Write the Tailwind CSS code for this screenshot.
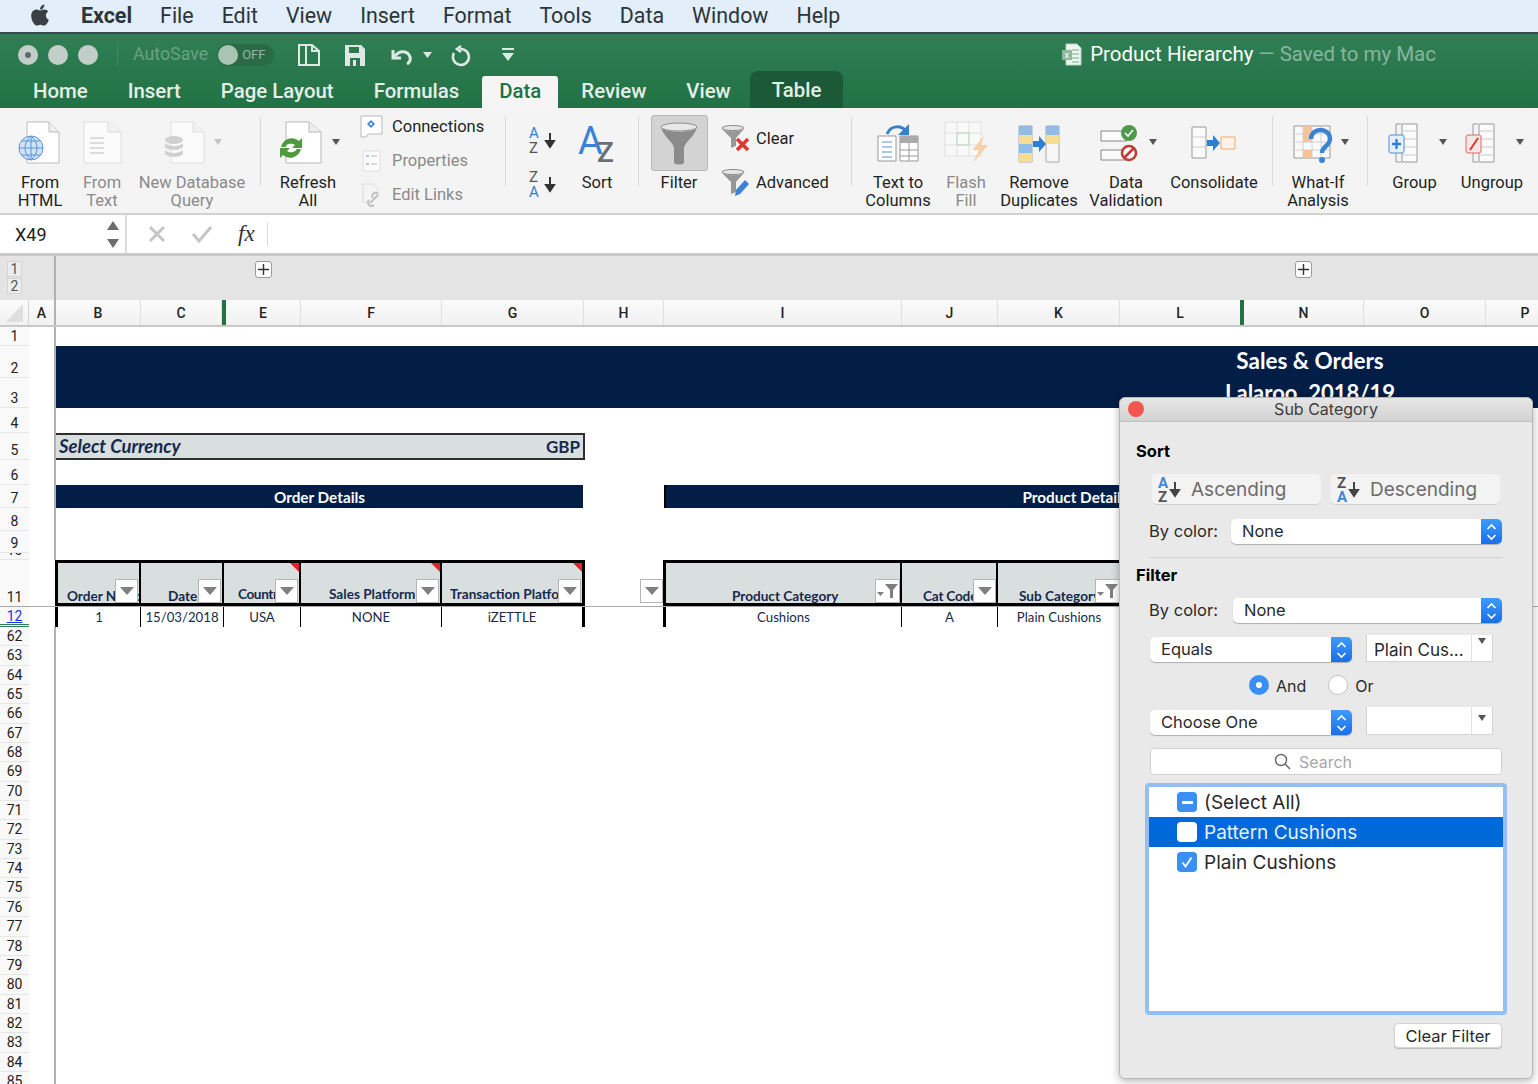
<!DOCTYPE html>
<html lang="en">
<head>
<meta charset="UTF-8">
<title>Product Hierarchy</title>
<script src="https://cdn.jsdelivr.net/npm/@tailwindcss/browser@4"></script>
</head>
<body class="w-[1538px] h-[1084px] overflow-hidden relative bg-white [font-family:Roboto,sans-serif] text-[#1c1c1c]">

<!-- mac menu bar -->
<div class="h-[34px] bg-[#e2eefa] border-b-2 border-[#3c4a4f] flex items-center pl-[30px] pt-px text-[21.4px] text-[#2b3438]">
  <svg class="w-[20px] h-[24px] mb-[3px]" viewBox="0 0 384 512" fill="#3a3f44"><path d="M318.7 268.7c-.2-36.7 16.4-64.4 50-84.8-18.8-26.9-47.2-41.7-84.7-44.6-35.5-2.8-74.3 20.7-88.5 20.7-15 0-49.4-19.7-76.4-19.7C63.3 141.2 4 184.8 4 273.5q0 39.3 14.4 81.2c12.8 36.7 59 126.7 107.2 125.2 25.2-.6 43-17.9 75.8-17.9 31.8 0 48.3 17.9 76.4 17.9 48.6-.7 90.4-82.5 102.6-119.3-65.2-30.7-61.7-90-61.7-91.9zm-56.6-164.2c27.3-32.4 24.8-61.9 24-72.5-24.1 1.4-52 16.4-67.9 34.9-17.5 19.8-27.8 44.3-25.6 71.9 26.1 2 49.9-11.4 69.5-34.3z"/></svg>
  <div class="flex gap-[28px] ml-[31px]">
    <span class="font-bold">Excel</span><span>File</span><span>Edit</span><span>View</span><span>Insert</span><span>Format</span><span>Tools</span><span>Data</span><span>Window</span><span>Help</span>
  </div>
</div>

<!-- title bar + tabs -->
<div class="h-[74px] bg-gradient-to-b from-[#317e55] to-[#207245] flex flex-col">
  <div class="h-[39px] flex items-center pl-[18px] pt-[2px] relative">
    <div class="w-[20px] h-[20px] rounded-full bg-[#c3cec8] flex items-center justify-center"><div class="w-[6px] h-[6px] rounded-full bg-[#5f6b64]"></div></div>
    <div class="w-[20px] h-[20px] rounded-full bg-[#c3cec8] ml-[10px]"></div>
    <div class="w-[20px] h-[20px] rounded-full bg-[#c3cec8] ml-[10px]"></div>
    <div class="w-px h-[24px] bg-[#3f8a60] ml-[19px]"></div>
    <span class="ml-[15px] text-[17.8px] text-white/30">AutoSave</span>
    <div class="ml-[9px] w-[57px] h-[22px] rounded-full bg-[#2a6b46] flex items-center">
      <div class="w-[20px] h-[20px] rounded-full bg-[#a9c4b3] ml-px"></div>
      <span class="ml-[4px] text-[13px] text-white/50">OFF</span>
    </div>
    <svg class="ml-[23px]" width="24" height="24" viewBox="0 0 24 24" fill="none" stroke="#dfe9e3" stroke-width="2"><path d="M2 2h13l7 6v14H2z"/><path d="M9 2v20M15 2v6h7"/></svg>
    <svg class="ml-[23px]" width="22" height="24" viewBox="0 0 22 24" fill="#dfe9e3"><path d="M1 2h16l4 4v17H1z"/><path d="M5 4h10v6H5z" fill="#2a7a4e"/><path d="M6 15h10v8H6z" fill="#2a7a4e"/><path d="M9 17h3v6H9z"/></svg>
    <svg class="ml-[23px]" width="26" height="20" viewBox="0 0 26 20" fill="none" stroke="#dfe9e3" stroke-width="3"><path d="M4 5v8h8"/><path d="M5 12c6-8 14-6 16 0 1 3-1 6-3 7"/></svg>
    <svg class="ml-[8px]" width="9" height="6" viewBox="0 0 9 6" fill="#dfe9e3"><path d="M0 0h9L4.5 6z"/></svg>
    <svg class="ml-[17px]" width="22" height="24" viewBox="0 0 22 24" fill="none" stroke="#dfe9e3" stroke-width="2.6"><path d="M12 3L8 6l4 3"/><path d="M11 6a8 8 0 1 1-6 4"/></svg>
    <svg class="ml-[31px]" width="12" height="13" viewBox="0 0 12 13" fill="#dfe9e3"><path d="M0 0h12v2H0zM0 5h12L6 13z"/></svg>
    <svg class="ml-[548px]" width="20" height="23" viewBox="0 0 20 23"><path d="M4 1h11l4 4v17H4z" fill="#eef5f0" stroke="#b9d4c3"/><path d="M10 7h7M10 11h7M10 15h7M10 19h7" stroke="#6fae87"/><path d="M0 7h10v10H0z" fill="#8fb8a0"/><text x="2.5" y="15" font-size="9" fill="#fff">x</text></svg>
    <span class="ml-[8px] text-[20.5px] text-white">Product Hierarchy</span>
    <span class="ml-[5px] text-[20.5px] text-white/45">— Saved to my Mac</span>
  </div>
  <div class="h-[35px] flex items-end pl-[33px] gap-[40px] text-[20.4px] font-medium text-[#e4efe8] leading-[30px]">
    <span class="h-[32px]">Home</span><span class="h-[32px]">Insert</span><span class="h-[32px]">Page Layout</span><span class="h-[32px]">Formulas</span>
    <span class="h-[32px] px-[17px] -mx-[17px] bg-[#f5f5f5] text-[#1f7244] rounded-t-[3px]">Data</span>
    <span class="h-[32px]">Review</span><span class="h-[32px]">View</span>
    <span class="h-[37px] leading-[39px] px-[22px] -mx-[21px] bg-[#1c5a37] text-[#e4efe8] rounded-t-[8px]">Table</span>
  </div>
</div>

<!-- ribbon -->
<div class="h-[107px] bg-[#f4f4f4] flex text-[16.5px] leading-[18px] text-center text-[#1f1f1f] border-b-2 border-[#d2d2d2] [&>div]:shrink-0 [&>div>svg]:mb-[2px]">
  <!-- get data -->
  <div class="w-[80px] flex flex-col items-center">
    <svg width="80" height="64" viewBox="0 108 80 64"><path d="M27 122h22l10 10v31H27z" fill="#fff" stroke="#bcbcbc"/><path d="M49 122v10h10" fill="#eee" stroke="#bcbcbc"/><circle cx="31" cy="148" r="12" fill="#cfe2f7" stroke="#5b93d6"/><path d="M19 148h24M31 136v24M22 141h18M22 155h18M31 136c-8 7-8 17 0 24M31 136c8 7 8 17 0 24" fill="none" stroke="#5b93d6"/></svg>
    <span>From<br>HTML</span>
  </div>
  <div class="w-[44px] flex flex-col items-center text-[#8a8a8a]">
    <svg width="44" height="64" viewBox="80 108 44 64"><path d="M84 122h24l13 10v31H84z" fill="#fbfbfb" stroke="#dcdcdc"/><path d="M108 122v10h13" fill="#f2f2f2" stroke="#dcdcdc"/><path d="M90 138h14M90 143h14M90 148h14M90 153h14" stroke="#d2d2d2" stroke-width="1.5"/></svg>
    <span>From<br>Text</span>
  </div>
  <div class="w-[136px] flex flex-col items-center text-[#8a8a8a]">
    <svg width="136" height="64" viewBox="124 108 136 64"><path d="M171 122h22l11 10v31h-33z" fill="#fbfbfb" stroke="#dfdfdf"/><path d="M193 122v10h11" fill="#f2f2f2" stroke="#dfdfdf"/><ellipse cx="174" cy="140" rx="9" ry="4" fill="#d0d0d0"/><path d="M165 143c3 4 15 4 18 0v4c-3 4-15 4-18 0zM165 150c3 4 15 4 18 0v4c-3 4-15 4-18 0z" fill="#d0d0d0"/><path d="M214 139h8l-4 6z" fill="#c4c4c4"/></svg>
    <span>New Database<br>Query</span>
  </div>
  <div class="w-px h-[70px] mt-[8px] bg-[#dadada]"></div>
  <!-- connections -->
  <div class="w-[94px] flex flex-col items-center">
    <svg width="94" height="64" viewBox="262 108 94 64"><path d="M287 122h23l12 10v31h-35z" fill="#fff" stroke="#b8b8b8"/><path d="M310 122v10h12" fill="#eee" stroke="#b8b8b8"/><path d="M282 147a11 11 0 0 1 18-6l3-3v10h-10l3-3a7 7 0 0 0-10 2z" fill="#4f9a3f"/><path d="M302 149a11 11 0 0 1-18 6l-3 3v-10h10l-3 3a7 7 0 0 0 10-2z" fill="#4f9a3f"/><path d="M333 139h8l-4 6z" fill="#555"/></svg>
    <span>Refresh<br>All</span>
  </div>
  <div class="flex flex-col pt-[2px] pl-[5px] w-[150px] text-left">
    <div class="h-[34px] flex items-center"><svg class="w-[24px] h-[24px] shrink-0" viewBox="0 0 24 24"><path d="M1 1h21v18H8l-2 3H1z" fill="#fff" stroke="#b8b8b8"/><path d="M11 5l4 4-4 4-4-4z" fill="#3d85d6"/><circle cx="11" cy="9" r="1.3" fill="#fff"/></svg><span class="ml-[8px]">Connections</span></div>
    <div class="h-[34px] flex items-center text-[#8a8a8a]"><svg class="w-[24px] h-[24px] shrink-0" viewBox="0 0 24 24"><path d="M3 2h17v20H3z" fill="#fbfbfb" stroke="#dedede"/><path d="M6 7h3M6 15h3" stroke="#a9c9ee" stroke-width="2"/><path d="M11 7h6M11 15h6" stroke="#cfcfcf" stroke-width="1.5"/></svg><span class="ml-[8px]">Properties</span></div>
    <div class="h-[34px] flex items-center text-[#8a8a8a]"><svg class="w-[24px] h-[24px] shrink-0" viewBox="0 0 24 24"><path d="M3 1h10l5 5v8M3 1v18h5" fill="none" stroke="#dcdcdc"/><path d="M10 20l8-8M13 15a3 3 0 0 1 5-4M9 17a3 3 0 0 0 5 5" fill="none" stroke="#c0c0c0" stroke-width="2"/></svg><span class="ml-[8px]">Edit Links</span></div>
  </div>
  <div class="w-px h-[70px] mt-[8px] bg-[#dadada]"></div>
  <!-- sort -->
  <div class="w-[132px] flex">
    <div class="w-[66px] flex flex-col pl-[22px] pt-[17px] gap-[14px]">
      <svg class="overflow-visible" width="30" height="30" viewBox="0 0 30 30"><text x="1" y="13" font-size="15" fill="#2f7fd8" font-family="Roboto">A</text><text x="1" y="28" font-size="15" fill="#555" font-family="Roboto">Z</text><path d="M22 8v11M18 16l4 6 4-6z" stroke="#333" stroke-width="2" fill="#333"/></svg>
      <svg class="overflow-visible" width="30" height="30" viewBox="0 0 30 30"><text x="1" y="13" font-size="15" fill="#555" font-family="Roboto">Z</text><text x="1" y="28" font-size="15" fill="#2f7fd8" font-family="Roboto">A</text><path d="M22 8v11M18 16l4 6 4-6z" stroke="#333" stroke-width="2" fill="#333"/></svg>
    </div>
    <div class="w-[50px] flex flex-col items-center">
      <svg class="mb-[2px]" width="50" height="64" viewBox="0 0 50 64"><text x="6" y="46" font-size="38" fill="#3b82d6" font-family="Roboto">A</text><text x="25" y="54" font-size="28" fill="#6b6f74" font-family="Roboto" font-weight="500">Z</text></svg>
      <span>Sort</span>
    </div>
  </div>
  <div class="w-px h-[70px] mt-[8px] bg-[#dadada]"></div>
  <!-- filter -->
  <div class="w-[82px] flex flex-col items-center pr-[2px]">
    <div class="mt-[7px] w-[57px] h-[56px] rounded-[3px] bg-[#d3d3d3] border border-[#b8b8b8] flex items-center justify-center">
      <svg width="40" height="44" viewBox="0 0 40 44"><ellipse cx="20" cy="6" rx="18" ry="4" fill="#e8e8e8" stroke="#8f8f8f"/><path d="M2 7c4 10 12 14 13 20v15c3 2 7 2 10 0V27c1-6 9-10 13-20-6 5-30 5-36 0z" fill="#8b8b8b"/></svg>
    </div>
    <span class="mt-[3px]">Filter</span>
  </div>
  <div class="flex flex-col pt-[9px] w-[130px] text-left">
    <div class="h-[44px] flex items-center"><svg class="w-[30px] h-[30px] shrink-0" viewBox="0 0 30 30"><ellipse cx="12" cy="4" rx="11" ry="2.500" fill="#e6e6e6" stroke="#8a8a8a"/><path d="M1 5l9 9v10l5-2v-8l8-9c-6 3-16 3-22 0z" fill="#979797"/><path d="M16 15l11 11M27 15L16 26" stroke="#d83a2e" stroke-width="3.4"/></svg><span class="ml-[5px]">Clear</span></div>
    <div class="h-[44px] flex items-center"><svg class="w-[30px] h-[30px] shrink-0" viewBox="0 0 30 30"><ellipse cx="12" cy="4" rx="11" ry="2.500" fill="#e6e6e6" stroke="#8a8a8a"/><path d="M1 5l9 9v12l5-2V14l8-9c-6 3-16 3-22 0z" fill="#979797"/><path d="M15 22l9-10 4 4-9 10-5 2z" fill="#3b82d6"/></svg><span class="ml-[5px]">Advanced</span></div>
  </div>
  <div class="w-px h-[70px] mt-[8px] bg-[#dadada]"></div>
  <!-- data tools -->
  <div class="w-[92px] flex flex-col items-center">
    <svg width="92" height="64" viewBox="853 108 92 64"><path d="M888 134c4-9 14-9 19-3" fill="none" stroke="#3b7fc9" stroke-width="3"/><path d="M910 124v11h-11z" fill="#3b7fc9"/><path d="M879 136h18v25h-18z" fill="#fff" stroke="#999"/><path d="M883 142h10M883 147h10M883 152h10M883 157h10" stroke="#8fb8e8" stroke-width="1.5"/><path d="M901 136h18v25h-18z" fill="#fff" stroke="#999"/><path d="M901 136h18v7h-18z" fill="#aaa"/><path d="M910 143v18M901 150h18M901 156h18" stroke="#999"/></svg>
    <span>Text to<br>Columns</span>
  </div>
  <div class="w-[44px] flex flex-col items-center text-[#8a8a8a]">
    <svg width="44" height="64" viewBox="945 108 44 64"><path d="M946 122h36v34h-36z" fill="#f9f9f9" stroke="#e0e0e0"/><path d="M958 122v34M970 122v34M946 133h36M946 145h36" stroke="#e0e0e0"/><path d="M958 133h12v12h-12z" fill="none" stroke="#b8d6bf"/><path d="M985 136l-12 14h7l-6 13 15-18h-7z" fill="#f7cfa8"/></svg>
    <span>Flash<br>Fill</span>
  </div>
  <div class="w-[102px] flex flex-col items-center">
    <svg width="102" height="64" viewBox="989 108 102 64"><path d="M1020 126h13v36h-13z" fill="#fff" stroke="#aaa"/><path d="M1020 126h13v9h-13zM1020 144h13v9h-13z" fill="#8fbdea"/><path d="M1020 135h13v9h-13zM1020 153h13v9h-13z" fill="#f6dd93"/><path d="M1047 126h13v36h-13z" fill="#f6f6f6" stroke="#aaa"/><path d="M1047 126h13v9h-13z" fill="#8fbdea"/><path d="M1047 135h13v9h-13z" fill="#f6dd93"/><path d="M1034 141h6v-5l7 8-7 8v-5h-6z" fill="#2f7fd0"/></svg>
    <span>Remove<br>Duplicates</span>
  </div>
  <div class="w-[72px] flex flex-col items-center">
    <svg width="72" height="64" viewBox="1091 108 72 64"><path d="M1102 131h26v10h-26zM1102 150h26v10h-26z" fill="#fbfbfb" stroke="#888"/><circle cx="1130" cy="133" r="8" fill="#4f9a4a"/><path d="M1126 133l3 3 5-6" fill="none" stroke="#fff" stroke-width="1.6"/><circle cx="1130" cy="153" r="7" fill="#fff" stroke="#c23b34" stroke-width="2.6"/><path d="M1125 158l10-10" stroke="#c23b34" stroke-width="2.6"/><path d="M1150 139h8l-4 6z" fill="#555"/></svg>
    <span>Data<br>Validation</span>
  </div>
  <div class="w-[104px] mr-[6px] flex flex-col items-center">
    <svg width="104" height="64" viewBox="1163 108 104 64"><path d="M1193 127h14v31h-14z" fill="#fbfbfb" stroke="#999"/><path d="M1193 137h14M1193 147h14" stroke="#ccc"/><path d="M1208 140h6v-5l7 8-7 8v-5h-6z" fill="#2f7fd0"/><path d="M1222 137h14v12h-14z" fill="#fdf3e8" stroke="#f0a868"/></svg>
    <span>Consolidate</span>
  </div>
  <div class="w-px h-[70px] mt-[8px] bg-[#dadada]"></div>
  <div class="w-[90px] mr-[4px] flex flex-col items-center">
    <svg class="overflow-visible" width="90" height="64" viewBox="1274 108 90 64"><path d="M1295 126h36v32h-36z" fill="#fafafa" stroke="#999"/><path d="M1304 126v32M1313 126v32M1322 126v32M1295 134h36M1295 142h36M1295 150h36" stroke="#d0d0d0"/><path d="M1304 126h9v8h-9zM1304 134h9v8h-9zM1304 150h9v8h-9z" fill="#f5c299"/><path d="M1312 139c0-12 19-12 19 0 0 7-8 7-8 14" fill="none" stroke="#3c82cf" stroke-width="4.4"/><circle cx="1323" cy="160" r="3" fill="#3c82cf"/><path d="M1342 139h8l-4 6z" fill="#555"/></svg>
    <span>What-If<br>Analysis</span>
  </div>
  <div class="w-px h-[70px] mt-[8px] bg-[#dadada]"></div>
  <div class="w-[93px] flex flex-col items-center">
    <svg width="93" height="64" viewBox="1369 108 93 64"><path d="M1402 124h-5v38h5" fill="none" stroke="#999"/><path d="M1403 124h15v38h-15z" fill="#fbfbfb" stroke="#999"/><path d="M1403 131h15M1403 139h15M1403 147h15M1403 155h15" stroke="#ccc"/><rect x="1390" y="135" width="15" height="18" rx="2" fill="#e5f0fc" stroke="#4d8fd6"/><path d="M1397.500 139v10M1393 144h9" stroke="#2f7fd0" stroke-width="2.4"/><path d="M1440 139h8l-4 6z" fill="#555"/></svg>
    <span>Group</span>
  </div>
  <div class="w-[62px] flex flex-col items-center">
    <svg class="shrink-0 overflow-visible" width="62" height="64" viewBox="1462 108 62 64"><path d="M1479 124h-5v38h5" fill="none" stroke="#999"/><path d="M1480 124h15v38h-15z" fill="#fbfbfb" stroke="#999"/><path d="M1480 131h15M1480 139h15M1480 147h15M1480 155h15" stroke="#ccc"/><rect x="1467" y="135" width="15" height="18" rx="2" fill="#fbe5e5" stroke="#d96a66"/><path d="M1471 150l8-12" stroke="#d83a2e" stroke-width="2"/><path d="M1517 139h8l-4 6z" fill="#555"/></svg>
    <span>Ungroup</span>
  </div>
</div>

<!-- formula bar -->
<div class="h-[41px] bg-white border-b-[3px] border-[#c9c9c9] flex items-center text-[18px]">
  <div class="w-[127px] h-full border-r-2 border-[#dddddd] flex items-center pl-[15px] justify-between pr-[6px]">
    <span>X49</span>
    <svg width="12" height="27" viewBox="0 0 12 27" fill="#6d6d6d"><path d="M6 0l6 9H0zM6 27l6-9H0z"/></svg>
  </div>
  <svg class="ml-[21px]" width="18" height="18" viewBox="0 0 18 18" stroke="#c6c6c6" stroke-width="3"><path d="M2 2l14 14M16 2L2 16"/></svg>
  <svg class="ml-[25px]" width="22" height="18" viewBox="0 0 22 18" fill="none" stroke="#c6c6c6" stroke-width="3"><path d="M2 9l6 7L20 2"/></svg>
  <span class="ml-[25px] [font-family:'Liberation_Serif',serif] italic text-[23px] text-[#333]">fx</span>
  <div class="ml-[12px] w-px h-[24px] bg-[#dcdcdc]"></div>
</div>

<!-- outline levels -->
<div class="h-[44px] bg-[#e4e4e4] flex">
  <div class="w-[56px] shrink-0 border-r-2 border-[#b2b2b2] pl-[7px] pt-[5px] flex flex-col gap-px text-[14px] leading-[16px] text-[#555] text-center">
    <span class="w-[15px] h-[16px] bg-[#ececec] border border-[#d4d4d4] leading-[14px]">1</span>
    <span class="w-[15px] h-[16px] bg-[#ececec] border border-[#d4d4d4] leading-[14px]">2</span>
  </div>
  <div class="ml-[199px] mt-[5px] w-[17px] h-[17px] bg-white border border-[#9a9a9a] rounded-[3px] flex items-center justify-center"><svg width="11" height="11" viewBox="0 0 11 11" stroke="#333" stroke-width="1.4"><path d="M5.500 0v11M0 5.500h11"/></svg></div>
  <div class="ml-[1023px] mt-[5px] w-[17px] h-[17px] bg-white border border-[#9a9a9a] rounded-[3px] flex items-center justify-center"><svg width="11" height="11" viewBox="0 0 11 11" stroke="#333" stroke-width="1.4"><path d="M5.500 0v11M0 5.500h11"/></svg></div>
</div>

<!-- column letters -->
<div class="h-[27px] flex bg-gradient-to-b from-[#fbfbfb] to-[#f1f1f1] border-b-2 border-[#c8c8c8] text-[14px] leading-[26px] text-[#222] text-center font-medium [&>div]:shrink-0">
  <div class="w-[29px] border-r border-[#d4d4d4] flex items-end justify-center pb-[3px]"><svg width="17" height="18" viewBox="0 0 17 18"><path d="M17 0v18H0z" fill="#dedede"/></svg></div>
  <div class="w-[27px] border-r-2 border-[#b2b2b2]">A</div>
  <div class="w-[85px] border-r border-[#e0e0e0]">B</div>
  <div class="w-[81px] border-r border-[#e0e0e0]">C</div>
  <div class="w-[4px] bg-[#217346]"></div>
  <div class="w-[75px] border-r border-[#e0e0e0]">E</div>
  <div class="w-[141px] border-r border-[#e0e0e0]">F</div>
  <div class="w-[142px] border-r border-[#e0e0e0]">G</div>
  <div class="w-[80px] border-r border-[#e0e0e0]">H</div>
  <div class="w-[238px] border-r border-[#e0e0e0]">I</div>
  <div class="w-[96px] border-r border-[#e0e0e0]">J</div>
  <div class="w-[122px] border-r border-[#e0e0e0]">K</div>
  <div class="w-[120px]">L</div>
  <div class="w-[4px] bg-[#217346]"></div>
  <div class="w-[120px] border-r border-[#e0e0e0]">N</div>
  <div class="w-[122px] border-r border-[#e0e0e0]">O</div>
  <div class="w-[78px]">P</div>
</div>

<!-- sheet rows -->
<div class="text-[#1a2a4a] [font-family:Lato,sans-serif]">
  <div class="h-[19px] flex">
    <div class="w-[29px] shrink-0 flex items-end justify-center overflow-hidden bg-[#f9f9f9] border-b border-[#e6e6e6] text-[14px] leading-[18px] text-[#222] [font-family:Roboto,sans-serif]">1</div>
    <div class="w-[27px] shrink-0 border-r-2 border-[#b2b2b2]"></div>
  </div>
  <div class="h-[32px] flex">
    <div class="w-[29px] shrink-0 flex items-end justify-center overflow-hidden bg-[#f9f9f9] border-b border-[#e6e6e6] text-[14px] leading-[18px] text-[#222] [font-family:Roboto,sans-serif]">2</div>
    <div class="w-[27px] shrink-0 border-r-2 border-[#b2b2b2]"></div>
    <div class="flex-1 bg-[#021e47] pl-[1154px] text-white font-bold text-[22.5px] leading-[30px]"><div class="w-[200px] text-center">Sales &amp; Orders</div></div>
  </div>
  <div class="h-[30px] flex">
    <div class="w-[29px] shrink-0 flex items-end justify-center overflow-hidden bg-[#f9f9f9] border-b border-[#e6e6e6] text-[14px] leading-[18px] text-[#222] [font-family:Roboto,sans-serif]">3</div>
    <div class="w-[27px] shrink-0 border-r-2 border-[#b2b2b2]"></div>
    <div class="flex-1 bg-[#021e47] pl-[1154px] text-white font-bold text-[22px] leading-[30px]"><div class="w-[200px] text-center">Lalaroo&nbsp; 2018/19</div></div>
  </div>
  <div class="h-[25px] flex">
    <div class="w-[29px] shrink-0 flex items-end justify-center overflow-hidden bg-[#f9f9f9] border-b border-[#e6e6e6] text-[14px] leading-[18px] text-[#222] [font-family:Roboto,sans-serif]">4</div>
    <div class="w-[27px] shrink-0 border-r-2 border-[#b2b2b2]"></div>
  </div>
  <div class="h-[27px] flex">
    <div class="w-[29px] shrink-0 flex items-end justify-center overflow-hidden bg-[#f9f9f9] border-b border-[#e6e6e6] text-[14px] leading-[18px] text-[#222] [font-family:Roboto,sans-serif]">5</div>
    <div class="w-[27px] shrink-0 border-r-2 border-[#b2b2b2]"></div>
    <div class="w-[529px] bg-[#d9dfdf] border-2 border-[#2e2e2e] border-l-0 flex items-center justify-between pl-[3px] pr-[3px] font-bold text-[#16294d]">
      <span class="italic text-[18.5px]">Select Currency</span><span class="text-[17px]">GBP</span>
    </div>
  </div>
  <div class="h-[25px] flex">
    <div class="w-[29px] shrink-0 flex items-end justify-center overflow-hidden bg-[#f9f9f9] border-b border-[#e6e6e6] text-[14px] leading-[18px] text-[#222] [font-family:Roboto,sans-serif]">6</div>
    <div class="w-[27px] shrink-0 border-r-2 border-[#b2b2b2]"></div>
  </div>
  <div class="h-[23px] flex">
    <div class="w-[29px] shrink-0 flex items-end justify-center overflow-hidden bg-[#f9f9f9] border-b border-[#e6e6e6] text-[14px] leading-[18px] text-[#222] [font-family:Roboto,sans-serif]">7</div>
    <div class="w-[27px] shrink-0 border-r-2 border-[#b2b2b2]"></div>
    <div class="w-[527px] bg-[#021e47] text-white font-bold text-[15.3px] text-center leading-[24px]">Order Details</div>
    <div class="ml-[81px] w-[820px] bg-[#021e47] border-l-2 border-black text-white font-bold text-[15.3px] text-center leading-[24px]">Product Details</div>
  </div>
  <div class="h-[23px] flex">
    <div class="w-[29px] shrink-0 flex items-end justify-center overflow-hidden bg-[#f9f9f9] border-b border-[#e6e6e6] text-[14px] leading-[18px] text-[#222] [font-family:Roboto,sans-serif]">8</div>
    <div class="w-[27px] shrink-0 border-r-2 border-[#b2b2b2]"></div>
  </div>
  <div class="h-[22px] flex">
    <div class="w-[29px] shrink-0 flex items-end justify-center overflow-hidden bg-[#f9f9f9] border-b border-[#e6e6e6] text-[14px] leading-[18px] text-[#222] [font-family:Roboto,sans-serif]">9</div>
    <div class="w-[27px] shrink-0 border-r-2 border-[#b2b2b2]"></div>
  </div>
  <div class="h-[7px] flex">
    <div class="w-[29px] shrink-0 flex items-end justify-center overflow-hidden bg-[#f9f9f9] border-b border-[#e6e6e6] text-[14px] leading-[18px] text-[#222] [font-family:Roboto,sans-serif]">10</div>
    <div class="w-[27px] shrink-0 border-r-2 border-[#b2b2b2]"></div>
  </div>

  <!-- row 11, table headers -->
  <div class="h-[46px] flex">
    <div class="w-[29px] shrink-0 flex items-end justify-center overflow-hidden bg-[#f9f9f9] text-[14px] leading-[18px] text-[#222] [font-family:Roboto,sans-serif]">11</div>
    <div class="w-[26px] shrink-0"></div>
    <div class="w-[530px] shrink-0 h-full border-[3px] border-black flex bg-[#d9dfdf] text-[13.6px] font-bold text-[#16294d] whitespace-nowrap text-center leading-[18px]">
      <div class="w-[83px] relative border-r-2 border-black overflow-hidden pl-[9px] pt-[24px] text-left">Order Number
        <div class="absolute right-[1px] bottom-0 w-[23px] h-[24px] bg-white border border-[#b5b5b5] flex items-center justify-center"><svg width="14" height="8" viewBox="0 0 14 8" fill="#7f7f7f"><path d="M0 0h14L7 8z"/></svg></div>
      </div>
      <div class="w-[83px] relative border-r-2 border-black overflow-hidden pl-[27px] pt-[24px] text-left">Date
        <div class="absolute right-[1px] bottom-0 w-[23px] h-[24px] bg-white border border-[#b5b5b5] flex items-center justify-center"><svg width="14" height="8" viewBox="0 0 14 8" fill="#7f7f7f"><path d="M0 0h14L7 8z"/></svg></div>
      </div>
      <div class="w-[77px] relative border-r-2 border-black overflow-hidden pl-[14px] pt-[22px] text-left tracking-[-0.4px]">Country
        <div class="absolute right-[1px] bottom-0 w-[23px] h-[24px] bg-white border border-[#b5b5b5] flex items-center justify-center"><svg width="14" height="8" viewBox="0 0 14 8" fill="#7f7f7f"><path d="M0 0h14L7 8z"/></svg></div>
        <svg class="absolute right-0 top-0" width="9" height="9" viewBox="0 0 9 9" fill="#e8202a"><path d="M0 0h9v9z"/></svg>
      </div>
      <div class="w-[141px] relative border-r-2 border-black overflow-hidden pl-[28px] pt-[22px] text-left">Sales Platform
        <div class="absolute right-[1px] bottom-0 w-[23px] h-[24px] bg-white border border-[#b5b5b5] flex items-center justify-center"><svg width="14" height="8" viewBox="0 0 14 8" fill="#7f7f7f"><path d="M0 0h14L7 8z"/></svg></div>
        <svg class="absolute right-0 top-0" width="9" height="9" viewBox="0 0 9 9" fill="#e8202a"><path d="M0 0h9v9z"/></svg>
      </div>
      <div class="w-[140px] relative overflow-hidden pl-[8px] pt-[22px] text-left">Transaction Platform
        <div class="absolute right-[1px] bottom-0 w-[23px] h-[24px] bg-white border border-[#b5b5b5] flex items-center justify-center"><svg width="14" height="8" viewBox="0 0 14 8" fill="#7f7f7f"><path d="M0 0h14L7 8z"/></svg></div>
        <svg class="absolute right-0 top-0" width="9" height="9" viewBox="0 0 9 9" fill="#e8202a"><path d="M0 0h9v9z"/></svg>
      </div>
    </div>
    <div class="ml-[55px] mt-[19px] w-[23px] h-[24px] shrink-0 bg-white border border-[#b5b5b5] flex items-center justify-center"><svg width="14" height="8" viewBox="0 0 14 8" fill="#7f7f7f"><path d="M0 0h14L7 8z"/></svg></div>
    <div class="w-[460px] shrink-0 h-full border-y-[3px] border-l-[3px] border-black flex bg-[#d9dfdf] text-[13.6px] font-bold text-[#16294d] whitespace-nowrap leading-[18px]">
      <div class="w-[236px] relative border-r-2 border-black overflow-hidden pl-[66px] pt-[24px]">Product Category
        <div class="absolute right-0 bottom-0 w-[25px] h-[24px] bg-white border border-[#b5b5b5] flex items-center justify-center"><svg width="22" height="16" viewBox="0 0 22 16" fill="#7f7f7f"><path d="M0 9h7L3.500 13zM8 1h13l-5 6v8h-3V7z"/></svg></div>
      </div>
      <div class="w-[96px] relative border-r-2 border-black overflow-hidden pl-[21px] pt-[24px] tracking-[-0.2px]">Cat Code
        <div class="absolute right-0 bottom-0 w-[23px] h-[24px] bg-white border border-[#b5b5b5] flex items-center justify-center"><svg width="14" height="8" viewBox="0 0 14 8" fill="#7f7f7f"><path d="M0 0h14L7 8z"/></svg></div>
      </div>
      <div class="w-[122px] relative overflow-hidden pl-[21px] pt-[24px]">Sub Category
        <div class="absolute right-0 bottom-0 w-[25px] h-[24px] bg-white border border-[#b5b5b5] flex items-center justify-center"><svg width="22" height="16" viewBox="0 0 22 16" fill="#7f7f7f"><path d="M0 9h7L3.500 13zM8 1h13l-5 6v8h-3V7z"/></svg></div>
      </div>
    </div>
  </div>

  <!-- row 12 -->
  <div class="h-[21px] flex border-t border-[#a8a8a8] text-[13.2px] leading-[20px] text-center whitespace-nowrap">
    <div class="w-[29px] shrink-0 border-b-[3px] border-double border-[#2f7d4f] bg-[#f9f9f9] text-[#1b35e8] underline text-[14px] leading-[18px] [font-family:Roboto,sans-serif]">12</div>
    <div class="w-[26px] shrink-0"></div>
    <div class="w-[530px] shrink-0 border-x-[3px] border-black flex">
      <div class="w-[83px] border-r border-black">1</div>
      <div class="w-[83px] border-r border-black">15/03/2018</div>
      <div class="w-[77px] border-r border-black">USA</div>
      <div class="w-[141px] border-r border-black">NONE</div>
      <div class="w-[140px]">iZETTLE</div>
    </div>
    <div class="ml-[78px] w-[460px] shrink-0 border-l-[3px] border-black flex">
      <div class="w-[236px] border-r border-black">Cushions</div>
      <div class="w-[96px] border-r border-black">A</div>
      <div class="w-[122px]">Plain Cushions</div>
    </div>
  </div>

  <!-- hidden rows collapse, rows 62+ -->
  <div class="flex">
    <div class="w-[29px] shrink-0 bg-[#f9f9f9] text-[14px] text-[#222] text-center [font-family:Roboto,sans-serif] [&>div]:h-[19.35px] [&>div]:leading-[19px] [&>div]:border-b [&>div]:border-[#e6e6e6]">
      <div>62</div><div>63</div><div>64</div><div>65</div><div>66</div><div>67</div><div>68</div><div>69</div><div>70</div><div>71</div><div>72</div><div>73</div><div>74</div><div>75</div><div>76</div><div>77</div><div>78</div><div>79</div><div>80</div><div>81</div><div>82</div><div>83</div><div>84</div><div>85</div>
    </div>
    <div class="w-[27px] shrink-0 border-r-2 border-[#b2b2b2]"></div>
  </div>
</div>

<!-- filter popover window -->
<div class="absolute left-[1119px] top-[397px] w-[414px] h-[682px] bg-[#e9e9e9] border border-[#b9b9b9] rounded-[6px] shadow-[0_2px_8px_rgba(0,0,0,0.3)] [font-family:Inter,sans-serif] text-[16.5px] text-[#2a2a2a]">
  <div class="h-[24px] bg-gradient-to-b from-[#e6e6e6] to-[#d2d2d2] border-b border-[#c0c0c0] rounded-t-[6px] relative text-center text-[16px] leading-[22px] text-[#3c3c3c]">
    <div class="absolute left-[8px] top-[3px] w-[16px] h-[16px] rounded-full bg-[#f4554f]"></div>
    Sub Category
  </div>
  <div class="pl-[16px]">
    <div class="mt-[19px] h-[20px] leading-[20px] font-bold text-black">Sort</div>
    <div class="mt-[13px] ml-[16px] flex gap-[10px] text-[19px] text-[#6c6c6c]">
      <div class="w-[169px] h-[31px] bg-[#f3f3f3] rounded-[5px] border-b border-[#d0d0d0] flex items-center pl-[6px]">
        <svg class="overflow-visible" width="28" height="28" viewBox="0 0 28 28"><text x="0" y="13" font-size="15" font-weight="700" fill="#3f86d8" font-family="Roboto">A</text><text x="0" y="27" font-size="15" font-weight="700" fill="#555" font-family="Roboto">Z</text><path d="M17 7v11M13 15l4 6 4-6z" stroke="#444" stroke-width="2" fill="#444"/></svg>
        <span class="ml-[5px] pt-[3px]">Ascending</span>
      </div>
      <div class="w-[169px] h-[31px] bg-[#f3f3f3] rounded-[5px] border-b border-[#d0d0d0] flex items-center pl-[6px]">
        <svg class="overflow-visible" width="28" height="28" viewBox="0 0 28 28"><text x="0" y="13" font-size="15" font-weight="700" fill="#555" font-family="Roboto">Z</text><text x="0" y="27" font-size="15" font-weight="700" fill="#3f86d8" font-family="Roboto">A</text><path d="M17 7v11M13 15l4 6 4-6z" stroke="#444" stroke-width="2" fill="#444"/></svg>
        <span class="ml-[5px] pt-[3px]">Descending</span>
      </div>
    </div>
    <div class="mt-[14px] ml-[13px] flex items-center h-[25px]">
      <span class="w-[82px]">By color:</span>
      <div class="w-[271px] h-[25px] bg-white rounded-[5px] shadow-[0_1px_1px_rgba(0,0,0,0.25)] flex items-center justify-between pl-[11px]">None
        <div class="w-[21px] h-full rounded-r-[5px] bg-gradient-to-b from-[#3f9bfb] to-[#1a6fe6] flex items-center justify-center"><svg width="11" height="18" viewBox="0 0 11 18" fill="none" stroke="#fff" stroke-width="1.6"><path d="M1.500 6l4-4 4 4M1.500 12l4 4 4-4"/></svg></div>
      </div>
    </div>
    <div class="mt-[13px] ml-[13px] w-[354px] h-px bg-[#d2d2d2]"></div>
    <div class="mt-[7px] h-[20px] leading-[20px] font-bold text-black">Filter</div>
    <div class="mt-[13px] ml-[13px] flex items-center h-[25px]">
      <span class="w-[84px]">By color:</span>
      <div class="w-[269px] h-[25px] bg-white rounded-[5px] shadow-[0_1px_1px_rgba(0,0,0,0.25)] flex items-center justify-between pl-[11px]">None
        <div class="w-[21px] h-full rounded-r-[5px] bg-gradient-to-b from-[#3f9bfb] to-[#1a6fe6] flex items-center justify-center"><svg width="11" height="18" viewBox="0 0 11 18" fill="none" stroke="#fff" stroke-width="1.6"><path d="M1.500 6l4-4 4 4M1.500 12l4 4 4-4"/></svg></div>
      </div>
    </div>
    <div class="mt-[14px] ml-[14px] flex items-center h-[25px]">
      <div class="w-[202px] h-[25px] bg-white rounded-[5px] shadow-[0_1px_1px_rgba(0,0,0,0.25)] flex items-center justify-between pl-[11px]">Equals
        <div class="w-[21px] h-full rounded-r-[5px] bg-gradient-to-b from-[#3f9bfb] to-[#1a6fe6] flex items-center justify-center"><svg width="11" height="18" viewBox="0 0 11 18" fill="none" stroke="#fff" stroke-width="1.6"><path d="M1.500 6l4-4 4 4M1.500 12l4 4 4-4"/></svg></div>
      </div>
      <div class="ml-[14px] w-[127px] h-[27px] -mt-[2px] bg-white border-x border-b border-[#d4d4d4] flex items-center justify-between pl-[7px] text-[17px]">
        <span class="pt-[6px]">Plain Cus...</span>
        <div class="w-[21px] h-full border-l border-[#e2e2e2] flex justify-center pt-[3px]"><svg width="8" height="6" viewBox="0 0 8 6" fill="#555"><path d="M0 0h8L4 6z"/></svg></div>
      </div>
    </div>
    <div class="mt-[13px] ml-[113px] flex items-center h-[20px] text-[16px]">
      <div class="w-[20px] h-[20px] rounded-full bg-[#3a8ff5] flex items-center justify-center"><div class="w-[6px] h-[6px] rounded-full bg-white"></div></div>
      <span class="ml-[7px] pt-px">And</span>
      <div class="ml-[22px] w-[20px] h-[20px] rounded-full bg-white border border-[#c4c4c4]"></div>
      <span class="ml-[7px] pt-px">Or</span>
    </div>
    <div class="mt-[15px] ml-[14px] flex items-center h-[25px]">
      <div class="w-[202px] h-[25px] bg-white rounded-[5px] shadow-[0_1px_1px_rgba(0,0,0,0.25)] flex items-center justify-between pl-[11px]">Choose One
        <div class="w-[21px] h-full rounded-r-[5px] bg-gradient-to-b from-[#3f9bfb] to-[#1a6fe6] flex items-center justify-center"><svg width="11" height="18" viewBox="0 0 11 18" fill="none" stroke="#fff" stroke-width="1.6"><path d="M1.500 6l4-4 4 4M1.500 12l4 4 4-4"/></svg></div>
      </div>
      <div class="ml-[14px] w-[127px] h-[28px] -mt-[3px] bg-white border-x border-b border-[#d4d4d4] flex justify-end">
        <div class="w-[21px] h-full border-l border-[#e2e2e2] flex justify-center pt-[8px]"><svg width="8" height="6" viewBox="0 0 8 6" fill="#555"><path d="M0 0h8L4 6z"/></svg></div>
      </div>
    </div>
    <div class="mt-[13px] ml-[14px] w-[352px] h-[27px] bg-white border border-[#d0d0d0] rounded-[4px] flex items-center justify-center pr-[26px] text-[16px] text-[#a8a8a8]">
      <svg class="mr-[8px]" width="17" height="17" viewBox="0 0 17 17" fill="none" stroke="#666" stroke-width="1.4"><circle cx="7" cy="7" r="5.500"/><path d="M11 11l5 5"/></svg><span>Search</span>
    </div>
    <div class="mt-[8px] ml-[9px] w-[362px] h-[232px] bg-white border-4 border-[#93c0f3] rounded-[4px] text-[19px] pt-0">
      <div class="h-[30px] flex items-center pl-[28px]">
        <div class="w-[20px] h-[20px] rounded-[4px] bg-[#3a8ff5] flex items-center justify-center"><div class="w-[11px] h-[3px] bg-white"></div></div>
        <span class="ml-[7px] pt-[2px]">(Select All)</span>
      </div>
      <div class="h-[30px] flex items-center pl-[28px] bg-[#0069d9] text-white/90">
        <div class="w-[20px] h-[20px] rounded-[4px] bg-white"></div>
        <span class="ml-[7px] pt-[2px]">Pattern Cushions</span>
      </div>
      <div class="h-[30px] flex items-center pl-[28px]">
        <div class="w-[20px] h-[20px] rounded-[4px] bg-[#3a8ff5] flex items-center justify-center"><svg width="12" height="12" viewBox="0 0 12 12" fill="none" stroke="#fff" stroke-width="1.800"><path d="M1.500 6.500l3 4 6-9"/></svg></div>
        <span class="ml-[7px] pt-[2px]">Plain Cushions</span>
      </div>
    </div>
    <div class="mt-[8px] ml-[258px] w-[108px] h-[25px] bg-white border border-[#d4d4d4] rounded-[4px] shadow-[0_1px_1px_rgba(0,0,0,0.2)] text-center leading-[24px]">Clear Filter</div>
  </div>
</div>

</body>
</html>
